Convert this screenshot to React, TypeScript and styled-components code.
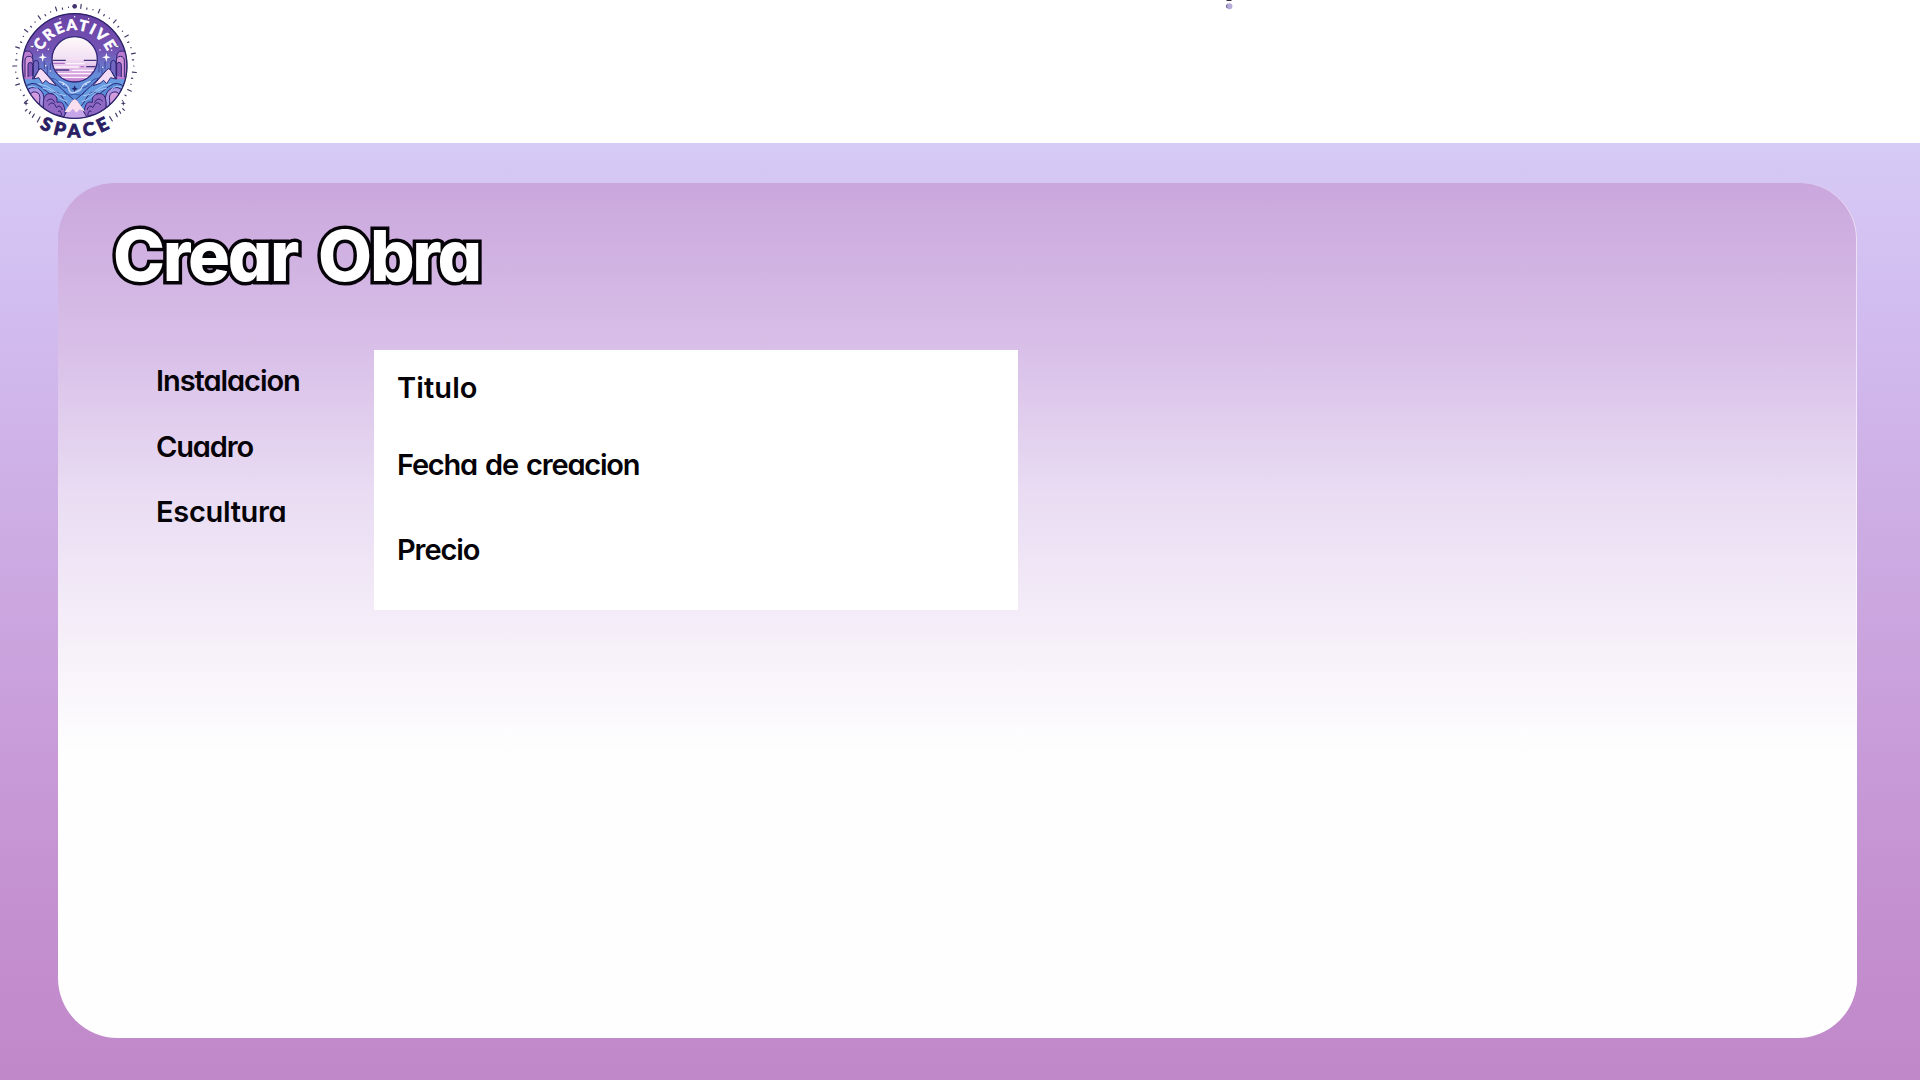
import React from 'react';
import styled, { createGlobalStyle } from 'styled-components';

const GlobalStyle = createGlobalStyle`
  * { box-sizing: border-box; }
  body { margin: 0; background: #c188ca; }
`;

const Page = styled.div`
  display: flex;
  flex-direction: column;
  height: 1080px;
  width: 1920px;
  overflow: hidden;
  font-family: Inter, 'Noto Sans', sans-serif;
  font-feature-settings: 'cv11' 1, 'kern' 1;
  color: #050308;
`;

const Header = styled.header`
  display: flex;
  align-items: flex-start;
  flex: none;
  height: 143px;
  background: #fff;
`;

const LogoSvg = styled.svg`
  display: block;
  width: 150px;
  height: 143px;
`;

const HeaderMark = styled.svg`
  display: block;
  width: 12px;
  height: 12px;
  margin-left: 1073px;
`;

const Main = styled.main`
  flex: 1;
  padding: 40px 63px 42px 58px;
  background: linear-gradient(#d6caf6 0%, #d2bdf0 17%, #cba6df 50%, #c591d1 80%, #c088c9 100%);
`;

const Panel = styled.section`
  height: 855px;
  padding: 35px 0 0 55px;
  border-radius: 56px 56px 60px 60px;
  background: linear-gradient(#caa7dd 0, #d9c0e8 170px, #e9dcf3 310px, #f4ecf8 430px, #fefefe 570px);
  box-shadow: inset -1px 0 rgba(255, 255, 255, 0.6);
`;

const Title = styled.h1`
  margin: 0;
  height: 132px;
  font-size: 70px;
  line-height: 76px;
  font-weight: 800;
  letter-spacing: -2.3px;
  word-spacing: 8px;
  color: #fff;
  -webkit-text-stroke: 7px #050308;
  paint-order: stroke fill;
  white-space: nowrap;
`;

const Content = styled.div`
  display: flex;
  align-items: flex-start;
`;

const Menu = styled.nav`
  display: flex;
  flex-direction: column;
  gap: 29.5px;
  width: 261px;
  padding: 13px 0 0 43px;
`;

const Form = styled.form`
  display: flex;
  flex-direction: column;
  width: 644px;
  height: 260px;
  padding: 20px 0 0 23px;
  background: #fff;
`;

const Label = styled.span<{ $spacing: number; $after?: number }>`
  display: block;
  height: 36px;
  margin-bottom: ${({ $after = 0 }) => $after}px;
  font-size: 29px;
  line-height: 36px;
  font-weight: 600;
  letter-spacing: ${({ $spacing }) => $spacing}px;
  word-spacing: 2px;
  white-space: nowrap;
`;

const ticks = Array.from({ length: 60 }, (_, i) => i * 6).filter(
  (a) => a !== 0 && !(a > 130 && a < 230)
);

function Half() {
  return (
    <g stroke="#302573" strokeWidth="3" strokeLinejoin="round">
      <path d="M64 250 76 208 99 237 116 209Q121 203 127 209L170 253 205 285 224 302V360H64Z" fill="#669be1" />
      <path d="M101 237 117 209Q122 203 128 210L169 257 148 250 137 241 128 251 116 233Z" fill="#f4ddf4" />
      <path d="M66 238V174Q66 153 82 153T98 173V238" fill="#b87bcf" />
      <path d="M75 232V183Q75 169 87 169T99 183V232" fill="#d294d9" />
      <path d="M84 231V196Q84 187 91 187T98 196V229" fill="#8257b8" />
      <path d="M100 226V193Q100 181 108 181T116 193V210" fill="#7267c2" />
      <path d="M71 265Q95 238 122 260T151 282Q175 266 190 296T224 329V358H150Q98 335 71 265Z" fill="#5a8edb" />
      <path d="M77 286Q81 259 105 263T132 294L129 331Q99 317 77 286Z" fill="#a995e5" />
      <path d="M88 292Q91 273 107 276T119 302V324" fill="#d29bde" />
      <path d="M130 305Q132 278 153 281T171 307Q188 301 193 322T193 350L154 341 130 325Z" fill="#9069c4" />
      <path d="M140 304Q154 288 165 308M145 315Q160 299 169 322M169 323Q181 311 187 330M174 336Q180 325 185 345" fill="none" />
      <path d="M114 251Q142 255 158 270T198 287M128 265Q151 266 163 281T202 305M75 267Q99 250 115 269" fill="none" stroke="#a8c8f4" />
      <path d="M151 235Q168 234 178 250T207 263M171 256Q186 264 194 277T224 282" fill="none" stroke="#3d51a6" />
      <path d="M133 184V207M142 198V222M151 190V217" fill="none" stroke="#45489f" />
    </g>
  );
}

function Logo() {
  return (
    <LogoSvg viewBox="0 0 450 429" role="img" aria-label="Creative Space">
      <defs>
        <linearGradient id="sky" x1="0" y1="0" x2="0" y2="1">
          <stop offset="0" stopColor="#6941a5" />
          <stop offset=".35" stopColor="#7453b4" />
          <stop offset=".6" stopColor="#648fda" />
          <stop offset="1" stopColor="#4b87d4" />
        </linearGradient>
        <linearGradient id="moon" x1="0" y1="0" x2="0" y2="1">
          <stop offset="0" stopColor="#fffafa" />
          <stop offset=".5" stopColor="#f2dff3" />
          <stop offset="1" stopColor="#c584d3" />
        </linearGradient>
        <clipPath id="disc"><circle cx="224" cy="198" r="157" /></clipPath>
        <clipPath id="moonClip"><circle cx="224" cy="178" r="66" /></clipPath>
        <path id="arcTop" d="M132 252A107 107 0 1 1 316 252" />
        <path id="arcBottom" d="M10 198A214 214 0 0 0 438 198" />
      </defs>
      <g stroke="#403666" strokeWidth="3.5" strokeLinecap="round">
        {ticks.map((a, i) => (
          <line
            key={a}
            x1="224"
            x2="224"
            y1={i % 3 === 0 ? 12 : 20}
            y2={i % 3 === 0 ? 24 : i % 3 === 1 ? 24 : 21}
            transform={`rotate(${a} 224 198)`}
          />
        ))}
        <path d="M81 328 76 333M92 335 88 341M103 342 97 352M120 351 112 366M329 350 337 363M347 340 352 350M358 333 362 340M368 326 373 331" />
      </g>
      <circle cx="224" cy="19" r="7" fill="#42316f" />
      <circle cx="224" cy="198" r="158" fill="url(#sky)" />
      <g clipPath="url(#disc)">
        <Half />
        <g transform="translate(448 0) scale(-1 1)"><Half /></g>
        <path d="M188 357 215 305Q224 292 233 305L264 357Z" fill="#c6a5e8" stroke="#302573" strokeWidth="3" />
        <path d="M194 336 215 304Q224 292 233 304L256 336 239 328 229 338 219 326 209 336Z" fill="#fae0ee" />
        <path d="M176 244Q203 250 207 269T242 269Q247 250 272 244" fill="none" stroke="#c5d6fa" strokeWidth="4" />
      </g>
      <circle cx="224" cy="178" r="68" fill="url(#moon)" stroke="#322778" strokeWidth="4" />
      <g clipPath="url(#moonClip)" strokeWidth="4" strokeLinecap="round">
        <path d="M153 181H196M253 181H295M155 210H206M260 200H290" stroke="#44347e" />
        <path d="M200 191H252M164 201H235M218 211H284M168 221H272M182 232H265" stroke="#fff4fb" />
        <path d="M157 190H193M243 200H250" stroke="#b170c5" />
      </g>
      <circle cx="224" cy="198" r="157" fill="none" stroke="#2b2167" strokeWidth="4" />
      <g fill="#fff">
        <path d="M128 158 131 169 141 172 131 175 128 186 125 175 115 172 125 169Z" />
        <path d="M319 158 322 169 332 172 322 175 319 186 316 175 306 172 316 169Z" />
        <path d="M88 140Q96 132 105 139 98 147 88 140ZM343 139Q352 132 360 140 350 147 343 139Z" stroke="#302573" strokeWidth="2" />
        {[[145, 148], [137, 197], [151, 213], [300, 150], [308, 202], [180, 56], [266, 56], [224, 50], [113, 151], [335, 151], [190, 253], [258, 253]].map(([x, y]) => (
          <circle key={`${x}-${y}`} cx={x} cy={y} r="2.2" />
        ))}
      </g>
      <path d="M224 256 227 263 234 266 227 269 224 276 221 269 214 266 221 263Z" fill="#26266f" />
      <path d="M78 302 80 308 86 310 80 312 78 318 76 312 70 310 76 308ZM370 302 372 308 378 310 372 312 370 318 368 312 362 310 368 308Z" fill="#403666" />
      <text fill="#fff" stroke="#fff" strokeWidth="1.5" fontFamily="Lato, sans-serif" fontSize="45" fontWeight="900" textAnchor="middle" textLength="246" lengthAdjust="spacing">
        <textPath href="#arcTop" startOffset="50%">CREATIVE</textPath>
      </text>
      <text fill="#292064" stroke="#292064" strokeWidth="2.5" fontFamily="Lato, sans-serif" fontSize="55" fontWeight="900" textAnchor="middle" textLength="222" lengthAdjust="spacing">
        <textPath href="#arcBottom" startOffset="50%">SPACE</textPath>
      </text>
    </LogoSvg>
  );
}

export default function App() {
  return (
    <>
      <GlobalStyle />
      <Page>
        <Header>
          <Logo />
          <HeaderMark viewBox="0 0 12 12" aria-hidden="true">
            <rect x="3.5" y="0" width="5" height="1" fill="#332b3d" />
            <circle cx="6.4" cy="6.3" r="3" fill="#b6abda" />
            <path d="M4 4.5Q3 6 4 8" fill="none" stroke="#64558d" />
          </HeaderMark>
        </Header>
        <Main>
          <Panel>
            <Title>Crear Obra</Title>
            <Content>
              <Menu>
                <Label $spacing={-1.05}>Instalacion</Label>
                <Label $spacing={-1.15}>Cuadro</Label>
                <Label $spacing={-0.3}>Escultura</Label>
              </Menu>
              <Form>
                <Label $spacing={0.1} $after={41}>Titulo</Label>
                <Label $spacing={-1.2} $after={49}>Fecha de creacion</Label>
                <Label $spacing={-1.1}>Precio</Label>
              </Form>
            </Content>
          </Panel>
        </Main>
      </Page>
    </>
  );
}
